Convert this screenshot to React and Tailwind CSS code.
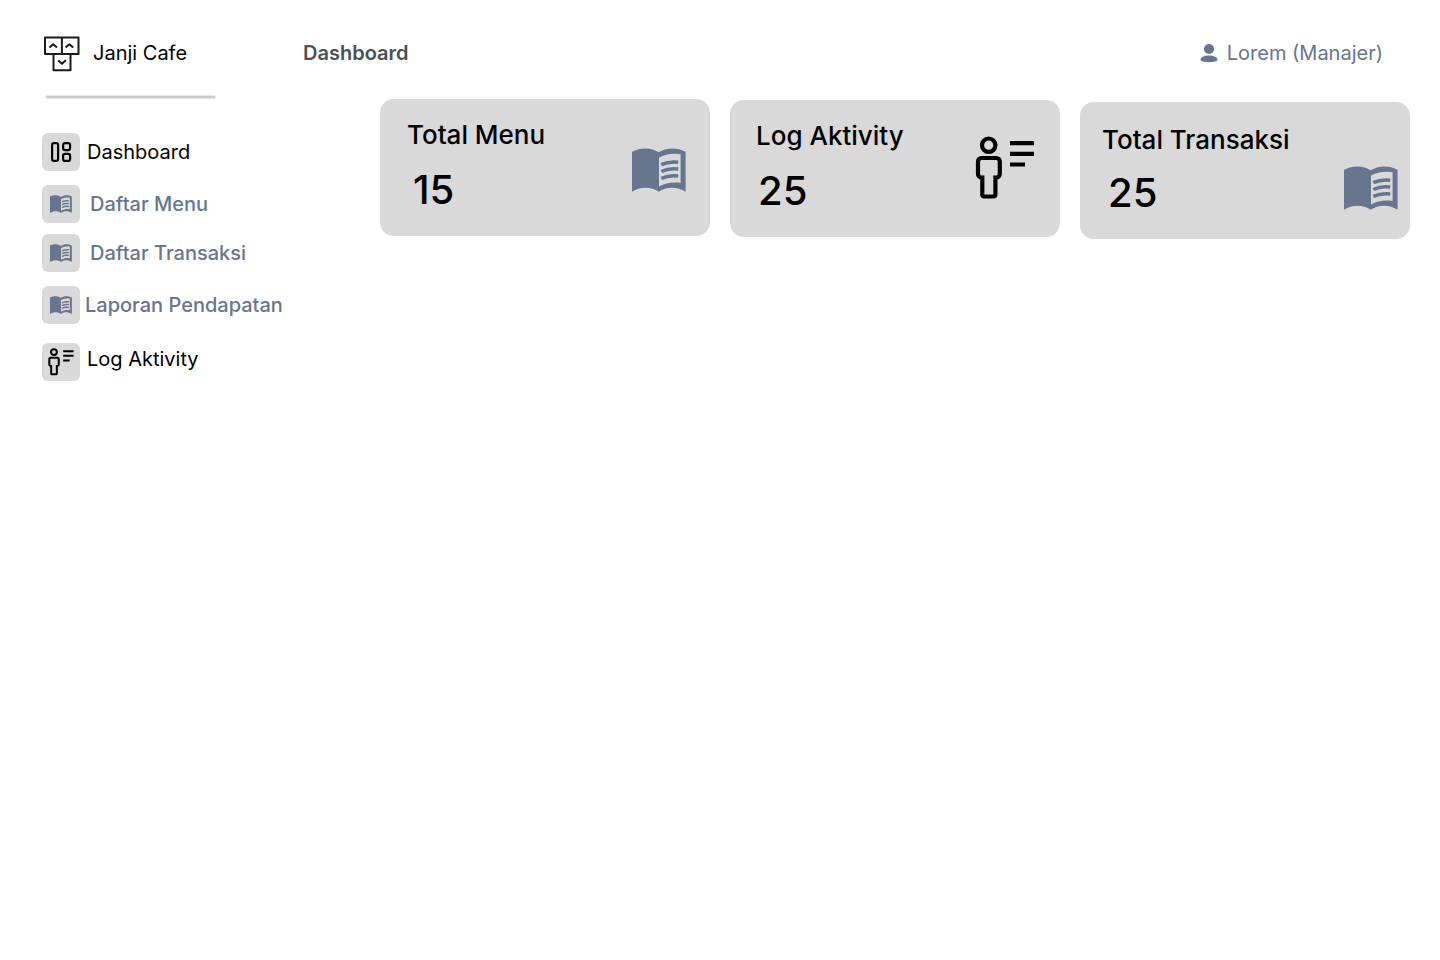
function LogoIcon() {
  return (
    <svg viewBox="0 0 36 36" className="h-9 w-9 shrink-0" fill="none" stroke="#1b1b1b" strokeWidth="2" strokeLinejoin="round" aria-hidden="true">
      <path d="M1 1.500h33.500v16.500H1zM17.900 1.500V18M9.500 18v16.300h17V18" />
      <path d="M5.400 11.600 9.200 8.200l3.800 3.400M21.600 11.600l3.800-3.400 3.800 3.400M14.200 24.300l3.800 3.400 3.800-3.400" />
    </svg>
  );
}

function DashboardIcon() {
  return (
    <svg viewBox="0 0 22 22" className="h-[22px] w-[22px]" fill="none" stroke="#000" strokeWidth="2.2" aria-hidden="true">
      <rect x="2.1" y="2.1" width="6" height="17.8" rx="1.8" />
      <rect x="13.1" y="2.1" width="7" height="7" rx="2" />
      <rect x="13.1" y="12.9" width="7" height="7" rx="2" />
    </svg>
  );
}

function BookIcon({ className }) {
  return (
    <svg viewBox="0 0 54 44" className={className} aria-hidden="true">
      <path
        fill="#68758f"
        fillRule="evenodd"
        d="M0 3.800C4 1.500 8.800.4 13.600.4c4.800 0 9.300 1.300 13.200 3.900C30.700 1.700 35.200.4 40 .4c4.800 0 9.600 1.100 13.600 3.400v40C49.300 41.200 44.800 39.800 40 39.800c-4.800 0-9.300 1.400-13.200 4-3.900-2.600-8.400-4-13.200-4C8.800 39.800 4.300 41.200 0 43.800zM27 9.600v29c6-3.400 14-4.900 21.600-3.600V6.300C41 4.900 33 6.200 27 9.600z"
      />
      <path fill="none" stroke="#68758f" strokeWidth="3.500" d="M29.300 16.600c5-2.300 11-3.100 16.900-2.400M29.300 23.500c5-2.300 11-3.100 16.900-2.400M29.300 30.400c5-2.300 11-3.100 16.900-2.400" />
    </svg>
  );
}

function ActivityIcon({ className, strokeWidth = 4.2 }) {
  return (
    <svg viewBox="0 0 60 64" className={className} fill="none" stroke="#000" strokeWidth={strokeWidth} aria-hidden="true">
      <circle cx="13.700" cy="9.200" r="6.700" />
      <path d="M9.400 41.500H6.600a3.600 3.600 0 0 1-3.600-3.600V25.600a3.600 3.600 0 0 1 3.600-3.600h14.600a3.600 3.600 0 0 1 3.600 3.600v12.300a3.600 3.600 0 0 1-3.600 3.600h-2.900M7.300 39.400v19.100a2 2 0 0 0 2 2h9.100a2 2 0 0 0 2-2V39.400" />
      <path d="M35 7.100h24M35 17.800h24M35 28.500h15" />
    </svg>
  );
}

function PersonIcon() {
  return (
    <svg viewBox="0 0 18 20" className="h-5 w-[18px]" fill="#68758f" aria-hidden="true">
      <circle cx="9" cy="6" r="5.100" />
      <path d="M.6 16.800C.6 14.400 4 12.600 9 12.600s8.400 1.800 8.400 4.200C17.400 18.400 13.600 19.200 9 19.200S.6 18.400.6 16.800z" />
    </svg>
  );
}

const book = <BookIcon className="h-[18px] w-[22px]" />;

const links = [
  { label: "Dashboard", icon: <DashboardIcon />, row: "gap-[7px]", text: "text-black" },
  { label: "Daftar Menu", icon: book, row: "mt-3.5 gap-2.5", text: "font-medium text-[#68758f]" },
  { label: "Daftar Transaksi", icon: book, row: "mt-[11px] gap-2.5", text: "font-medium text-[#68758f]" },
  { label: "Laporan Pendapatan", icon: book, row: "mt-3.5 gap-[5px]", text: "font-medium text-[#68758f]" },
  { label: "Log Aktivity", icon: <ActivityIcon className="h-7 w-[26px]" strokeWidth={4.6} />, row: "mt-[19px] gap-[7px]", text: "pb-1.5 text-black" },
];

const cards = [
  {
    title: "Total Menu",
    value: 15,
    box: "pt-5 pl-[27px] pr-6",
    body: "gap-[19px]",
    number: "pl-1.5",
    icon: <BookIcon className="mt-[29px] h-11 w-[54px]" />,
  },
  {
    title: "Log Aktivity",
    value: 25,
    box: "mt-px pt-5 pl-[26px] pr-[25px]",
    body: "gap-[19px]",
    number: "pl-0.5",
    icon: <ActivityIcon className="mt-4 h-16 w-[60px]" />,
  },
  {
    title: "Total Transaksi",
    value: 25,
    box: "mt-[3px] pt-[22px] pl-[22px] pr-3",
    body: "gap-[17px]",
    number: "pl-1.5",
    icon: <BookIcon className="mt-[42px] h-11 w-[54px]" />,
  },
];

export default function App() {
  return (
    <div className="flex min-h-screen bg-white font-['Inter',sans-serif] text-xl leading-6 text-black">
      <aside className="w-[303px] shrink-0 pt-9 pl-[42px]">
        <a href="#home" className="flex items-center gap-[13px] pl-0.5">
          <LogoIcon />
          <span className="pb-0.5">Janji Cafe</span>
        </a>
        <hr className="mt-[23px] ml-[3px] h-1 w-[171px] rounded-sm border border-[#e9e9e9] bg-[#cbcbcb]" />
        <nav className="mt-[34px] flex flex-col">
          {links.map((l) => (
            <a key={l.label} href="#menu" className={`flex items-center whitespace-nowrap ${l.row}`}>
              <span className="flex h-[38px] w-[38px] shrink-0 items-center justify-center rounded-md bg-[#d9d9d9]">{l.icon}</span>
              <span className={l.text}>{l.label}</span>
            </a>
          ))}
        </nav>
      </aside>
      <div className="min-w-0 flex-1">
        <header className="flex items-center justify-between pt-[41px] pr-[57px]">
          <h1 className="font-semibold text-[#4b4f58]">Dashboard</h1>
          <button type="button" className="flex items-center gap-[9px] text-[#68758f]">
            <PersonIcon />
            <span>Lorem (Manajer)</span>
          </button>
        </header>
        <main className="grid grid-cols-3 items-start gap-5 pt-[34px] pr-[30px] pl-[77px]">
          {cards.map((c) => (
            <section key={c.title} className={`flex min-h-[137px] items-start justify-between rounded-[14px] bg-[#d9d9d9] font-medium ${c.box}`}>
              <div className={`flex flex-col whitespace-nowrap ${c.body}`}>
                <h2 className="text-[26px] leading-8">{c.title}</h2>
                <p className={`text-[40px] leading-10 ${c.number}`}>{c.value}</p>
              </div>
              {c.icon}
            </section>
          ))}
        </main>
      </div>
    </div>
  );
}
